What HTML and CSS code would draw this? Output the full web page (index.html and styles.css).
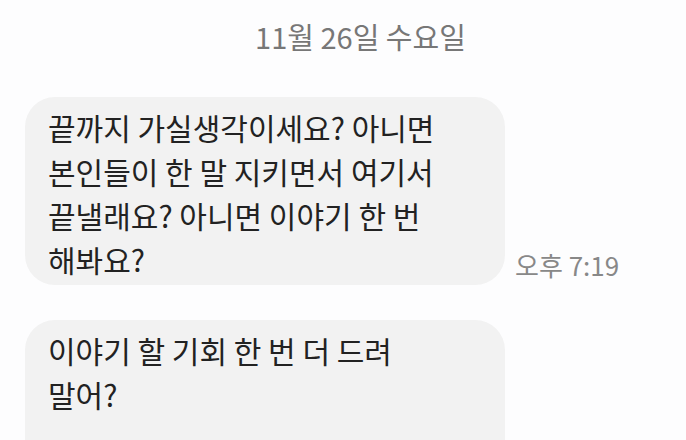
FILE: index.html
```html
<!DOCTYPE html>
<html>
  <head>
    <meta charset="utf-8" />
    <title>대화</title>
    <link rel="stylesheet" href="styles.css">
  </head>
  <body>
    <div class="chat">
      <div class="date">11월 26일 수요일</div>

      <div class="row">
        <div class="bubble">끝까지 가실생각이세요? 아니면<br>본인들이 한 말 지키면서 여기서<br>끝낼래요? 아니면 이야기 한 번<br>해봐요?</div>
        <span class="time">오후 7:19</span>
      </div>

      <div class="row">
        <div class="bubble">이야기 할 기회 한 번 더 드려<br>말어?<br>&nbsp;<br>&nbsp;</div>
      </div>
    </div>
  </body>
</html>
```

FILE: styles.css
```css
body {
  margin: 0;
  padding: 0;
  background-color: #fdfdfe;
  font-family: "Noto Sans CJK KR", "Noto Sans", sans-serif;
  color: #222;
  overflow: hidden;
}

.chat {
  padding: 0 0 0 25px;
}

/* Date divider */
.date {
  box-sizing: border-box;
  height: 97px;
  padding: 15px 0 0 10px;
  text-align: center;
  font-size: 29px;
  color: #777;
}

/* Message rows */
.row {
  display: flex;
  align-items: flex-end;
  gap: 10px;
  margin-bottom: 35px;
}

.bubble {
  width: 480px;
  box-sizing: border-box;
  padding: 8px 20px 4px 23px;
  background-color: #f2f2f2;
  border-radius: 30px;
  font-size: 30px;
  line-height: 44px;
}

.time {
  font-size: 26px;
  color: #888;
  padding-bottom: 2px;
}
```
